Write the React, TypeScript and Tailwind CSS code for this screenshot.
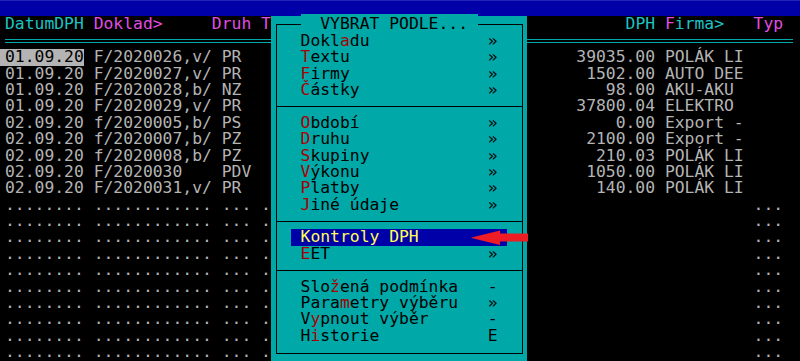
const rows = [
  ["01.09.20", "F/2020026,v/", "PR", "39035.00", "POLÁK LI"],
  ["01.09.20", "F/2020027,v/", "PR", "1502.00", "AUTO DEE"],
  ["01.09.20", "F/2020028,b/", "NZ", "98.00", "AKU-AKU"],
  ["01.09.20", "F/2020029,v/", "PR", "37800.04", "ELEKTRO"],
  ["02.09.20", "f/2020005,b/", "PS", "0.00", "Export -"],
  ["02.09.20", "f/2020007,b/", "PZ", "2100.00", "Export -"],
  ["02.09.20", "f/2020008,b/", "PZ", "210.03", "POLÁK LI"],
  ["02.09.20", "F/2020030", "PDV", "1050.00", "POLÁK LI"],
  ["02.09.20", "F/2020031,v/", "PR", "140.00", "POLÁK LI"],
];

type Item = { pre: string; hot: string; post: string; mark: string };

const top: Item[] = [
  { pre: "Dokl", hot: "a", post: "du", mark: "»" },
  { pre: "", hot: "T", post: "extu", mark: "»" },
  { pre: "", hot: "F", post: "irmy", mark: "»" },
  { pre: "", hot: "Č", post: "ástky", mark: "»" },
];

const middle: Item[] = [
  { pre: "", hot: "O", post: "bdobí", mark: "»" },
  { pre: "", hot: "D", post: "ruhu", mark: "»" },
  { pre: "", hot: "S", post: "kupiny", mark: "»" },
  { pre: "", hot: "V", post: "ýkonu", mark: "»" },
  { pre: "", hot: "P", post: "latby", mark: "»" },
  { pre: "", hot: "J", post: "iné údaje", mark: "»" },
];

const bottom: Item[] = [
  { pre: "Slo", hot: "ž", post: "ená podmínka", mark: "-" },
  { pre: "Para", hot: "m", post: "etry výběru", mark: "»" },
  { pre: "V", hot: "y", post: "pnout výběr", mark: "-" },
  { pre: "H", hot: "i", post: "storie", mark: "E" },
];

const ROW = "h-[16.4px] leading-[16.4px] whitespace-pre";

function MenuItem({ item }: { item: Item }) {
  return (
    <div className={`${ROW} flex pl-[29.55px] text-black`}>
      <span className="w-[187.15px]">
        {item.pre}
        <span className="text-[#a80000]">{item.hot}</span>
        {item.post}
      </span>
      <span>{item.mark}</span>
    </div>
  );
}

function Separator() {
  return (
    <div className="h-[16.4px] flex items-center pl-[5px] pr-[4px]">
      <div className="h-px w-full bg-black" />
    </div>
  );
}

function Menu() {
  return (
    <div className="absolute left-[271px] top-[16.4px] w-[256px] h-[344.6px] bg-[#00a8a8]">
      {/* ramecek */}
      <div className="absolute left-[5px] right-[4px] top-[8px] bottom-[7px] border border-black" />

      <div className={`${ROW} relative pl-[29.55px] text-black`}>
        <span className="bg-[#00a8a8]">{"  VYBRAT PODLE... "}</span>
      </div>

      {top.map((it) => (
        <MenuItem key={it.post} item={it} />
      ))}
      <Separator />
      {middle.map((it) => (
        <MenuItem key={it.post} item={it} />
      ))}
      <Separator />

      <div className={`${ROW} ml-[19.7px] w-[216.7px] bg-[#0000a8] pl-[9.85px] text-[#ffff55]`}>
        Kontroly DPH
      </div>
      <MenuItem item={{ pre: "", hot: "E", post: "ET", mark: "»" }} />
      <Separator />
      {bottom.map((it) => (
        <MenuItem key={it.post} item={it} />
      ))}
    </div>
  );
}

// jeden radek tabulky: leva cast (sloupce 0-26), mezera pod menu, prava cast (od sloupce 53)
function Line({ left, right }: { left: React.ReactNode; right: React.ReactNode }) {
  return (
    <div className={`${ROW} flex pl-[5px]`}>
      <div className="w-[265.95px]">{left}</div>
      <div className="ml-[256.1px]">{right}</div>
    </div>
  );
}

export default function App() {
  return (
    <div className="relative w-[800px] h-[361px] overflow-hidden bg-black font-['DejaVu_Sans_Mono',monospace] text-[16.36px] text-[#b4b4b4]">
      {/* horni modry pruh */}
      <div className="h-[16.4px] bg-[#0000a8] border-t border-[#2424b8]" />

      {/* hlavicka */}
      <Line
        left={
          <>
            <span className="text-[#1cc4c4]">DatumDPH </span>
            <span className="text-[#e04ee0]">{"Doklad>     Druh T"}</span>
          </>
        }
        right={
          <>
            {" ".repeat(10)}
            <span className="text-[#1cc4c4]">DPH </span>
            <span className="text-[#e04ee0]">F</span>
            <span className="text-[#1cc4c4]">{"irma>   "}</span>
            <span className="text-[#e04ee0]">Typ</span>
          </>
        }
      />

      <div className="h-[16.4px] flex items-center pl-[5px] pr-[7px]">
        <div className="h-[4px] w-full border-y border-[#00a8a8]" />
      </div>

      {rows.map((r, i) => (
        <Line
          key={i}
          left={
            <>
              {i === 0 ? (
                <span className="inline-block -ml-[5px] pl-[5px] bg-[#b4b4b4] text-black">{r[0]}</span>
              ) : (
                r[0]
              )}
              {` ${r[1].padEnd(12)} ${r[2]}`}
            </>
          }
          right={r[3].padStart(13) + " " + r[4]}
        />
      ))}

      {Array.from({ length: 10 }).map((_, i) => (
        <Line key={i} left="........ ............ ... ." right={" ".repeat(23) + "..."} />
      ))}

      <Menu />

      {/* cervena sipka */}
      <svg className="absolute left-[470px] top-[229px]" width="60" height="18" viewBox="0 0 60 18">
        <polygon points="1.5,8.5 30,1.5 30,4.5 58,4.5 58,12.5 30,12.5 30,16 1.5,9" fill="#ee1c24" />
      </svg>
    </div>
  );
}
